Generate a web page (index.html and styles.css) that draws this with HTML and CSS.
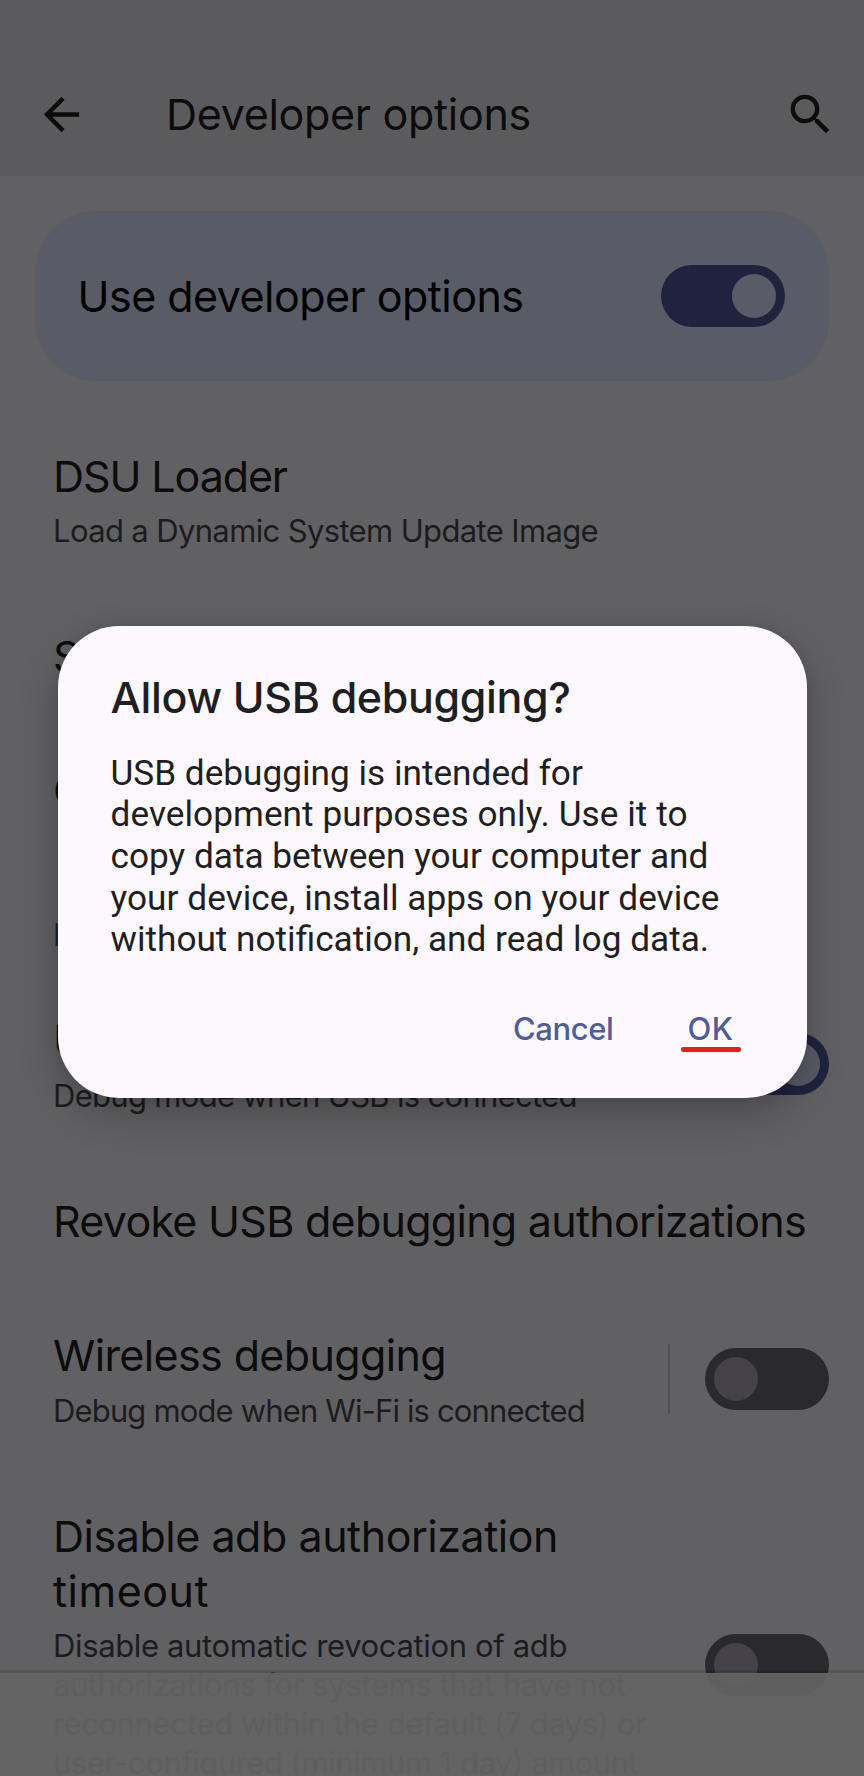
FILE: index.html
```html
<!DOCTYPE html>
<html lang="en">
<head>
<meta charset="utf-8">
<title>Developer options</title>
<link rel="stylesheet" href="styles.css">
</head>
<body>
<div class="screen">
  <header class="appbar">
    <svg class="icon" viewBox="0 0 24 24"><path d="M20 11H7.83l5.59-5.59L12 4l-8 8 8 8 1.41-1.41L7.83 13H20z"/></svg>
    <h1 class="appbar-title">Developer options</h1>
    <svg class="icon" viewBox="0 0 24 24"><path d="M15.5 14h-.79l-.28-.27A6.47 6.47 0 0 0 16 9.500 6.500 6.500 0 1 0 9.500 16c1.610 0 3.090-.59 4.230-1.570l.27.28v.79l5 4.990L20.490 19l-4.990-5zm-6 0C7.010 14 5 11.990 5 9.500S7.010 5 9.500 5 14 7.010 14 9.500 11.990 14 9.500 14z"/></svg>
  </header>
  <main>
    <section class="master">
      <span class="master-title">Use developer options</span>
      <span class="switch on"><span class="thumb"></span></span>
    </section>
    <div class="row">
      <div class="text">
        <div class="title tight">DSU Loader</div>
        <div class="summary">Load a Dynamic System Update Image</div>
      </div>
    </div>
    <div class="row"><div class="text"><div class="title">System UI demo mode</div></div></div>
    <div class="row"><div class="text"><div class="title">Quick settings developer tiles</div></div></div>
    <h2 class="category">Debugging</h2>
    <div class="row">
      <div class="text">
        <div class="title">USB debugging</div>
        <div class="summary usb">Debug mode when USB is connected</div>
      </div>
      <span class="switch on"><span class="thumb"></span></span>
    </div>
    <div class="row"><div class="text"><div class="title revoke">Revoke USB debugging authorizations</div></div></div>
    <div class="row">
      <div class="text">
        <div class="title wireless">Wireless debugging</div>
        <div class="summary wifi">Debug mode when Wi-Fi is connected</div>
      </div>
      <span class="divider"></span>
      <span class="switch"><span class="thumb"></span></span>
    </div>
    <div class="row">
      <div class="text">
        <div class="title adb">Disable adb authorization<br><span class="loose">timeout</span></div>
        <div class="summary revocation">Disable automatic revocation of adb<br>authorizations for systems that have not<br><span class="snug">reconnected within the default (7 days) or<br>user-configured (minimum 1 day) amount</span></div>
      </div>
      <span class="switch low"><span class="thumb"></span></span>
    </div>
  </main>
  <div class="navbar"></div>
  <div class="dialog" role="dialog">
    <h2 class="dialog-title">Allow USB debugging?</h2>
    <p class="dialog-body">USB debugging is intended for<br><span class="wide">development purposes only. Use it to</span><br>copy data between your computer and<br><span class="wide">your device, install apps on your device</span><br>without notification, and read log data.</p>
    <div class="actions"><span class="button cancel">Cancel</span><span class="button ok">OK</span></div>
  </div>
</div>
</body>
</html>
```
FILE: styles.css
```css
* { box-sizing: border-box; }
body { margin: 0; background: #616163; }
.screen {
  position: relative;
  width: 864px;
  height: 1776px;
  overflow: hidden;
  background: #616163;
  color: #0c0c0d;
  font-family: Inter, "Open Sans", sans-serif;
}
.appbar {
  display: flex;
  align-items: center;
  height: 176px;
  padding: 52px 27px 0 35px;
  background: #5b5b5d;
}
.icon { width: 53px; height: 53px; fill: #0c0c0d; flex: none; }
.appbar-title { flex: 1; margin: 0 0 0 78px; font-size: 43px; line-height: 55px; font-weight: 400; letter-spacing: -.3px; }
.master {
  display: flex;
  align-items: center;
  justify-content: space-between;
  height: 170px;
  margin: 35px 35px 28px;
  padding: 0 44px 0 42.5px;
  border-radius: 62px;
  background: #595b67;
}
.master-title { font-size: 43px; line-height: 55px; color: #000; letter-spacing: -.53px; }
.row { display: flex; align-items: center; padding: 39.5px 35px 39.5px 53px; }
.text { flex: 1; white-space: nowrap; }
.title { font-size: 43px; line-height: 55px; letter-spacing: -.6px; }
.title.tight { letter-spacing: -1.1px; }
.title.revoke { letter-spacing: -.73px; }
.title.wireless { letter-spacing: -.63px; }
.title.adb { letter-spacing: -.47px; }
.loose { letter-spacing: .5px; }
.summary { margin-top: 7.7px; font-size: 31px; line-height: 39px; color: #1c1c1f; letter-spacing: -.64px; }
.summary.usb { letter-spacing: -.69px; }
.summary.wifi { letter-spacing: -.85px; }
.summary.revocation { letter-spacing: -.36px; }
.snug { letter-spacing: -.47px; }
.category { height: 116px; margin: 0; padding: 57px 53px 0; font-size: 31px; line-height: 39px; font-weight: 500; color: #1f2341; }
.switch { flex: none; width: 124px; height: 62px; padding: 9px; border-radius: 31px; background: #2a292e; display: flex; }
.switch.low { margin-top: 39px; }
.thumb { width: 44px; height: 44px; border-radius: 50%; background: #454349; }
.switch.on { background: #20233e; justify-content: flex-end; }
.switch.on .thumb { background: #595b67; }
.divider { width: 2px; height: 70px; margin-right: 35px; background: #515153; }
.navbar {
  position: absolute;
  left: 0;
  right: 0;
  bottom: 0;
  height: 106px;
  border-top: 3px solid rgba(0,0,0,.1);
  background: rgba(99,99,99,.94);
  background-clip: padding-box;
}
.dialog {
  position: absolute;
  left: 57.5px;
  top: 625.5px;
  width: 749px;
  height: 472px;
  padding: 44px 53px 0;
  border-radius: 61px;
  background: #fdf8fe;
  color: #1f1f21;
  box-shadow: 0 16px 40px rgba(0,0,0,.24), 0 0 12px rgba(0,0,0,.1);
}
.dialog-title { margin: 0; font-size: 43px; line-height: 55px; font-weight: 500; letter-spacing: -.37px; }
.dialog-body { margin: 28px 0 0; font-family: Roboto, sans-serif; font-size: 35.200px; line-height: 41.7px; white-space: nowrap; }
.wide { letter-spacing: .05px; }
.actions { display: flex; justify-content: flex-end; gap: 74px; margin-top: 48px; padding-right: 20px; font-size: 31px; line-height: 39px; font-weight: 500; color: #4f5c9b; }
.cancel { letter-spacing: -.4px; }
.ok { position: relative; letter-spacing: .46px; }
.ok::after { content: ""; position: absolute; left: -7px; top: 38px; width: 60px; height: 5px; border-radius: 2px; background: #ed1c24; }
```
